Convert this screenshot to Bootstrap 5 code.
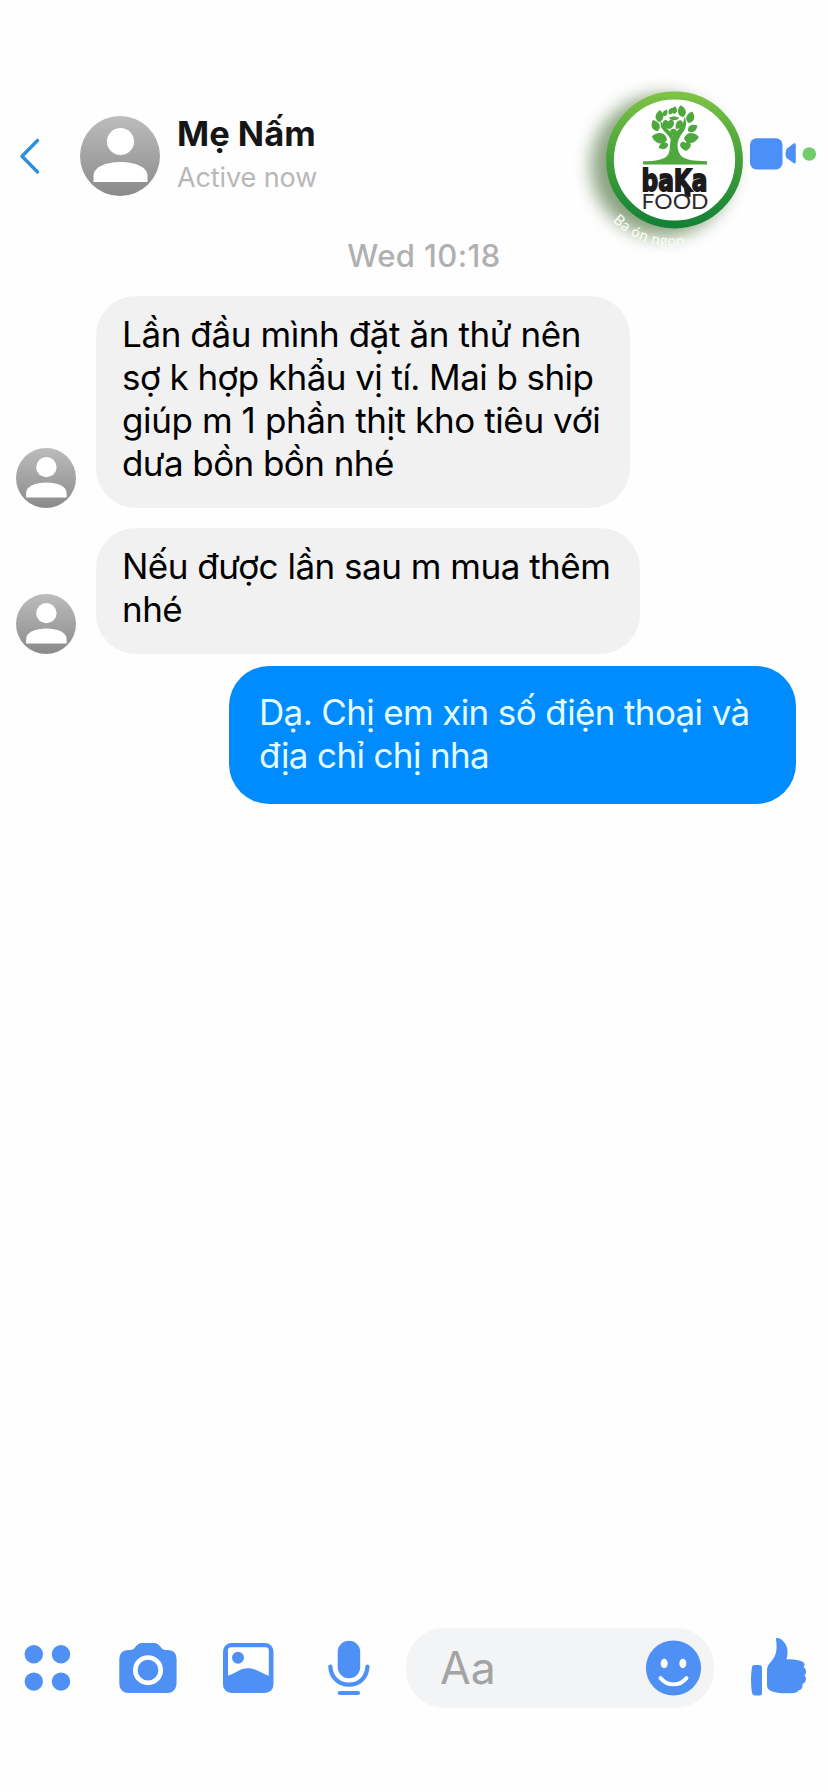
<!DOCTYPE html>
<html lang="vi">
<head>
<meta charset="utf-8">
<meta name="viewport" content="width=device-width, initial-scale=1">
<title>Mẹ Nấm</title>
<link href="https://cdn.jsdelivr.net/npm/bootstrap@5.3.0/dist/css/bootstrap.min.css" rel="stylesheet">
<style>
  body { font-family: Inter, "Noto Sans", sans-serif; background: #fefefe; color: #000; }
  .chat { height: 1792px; padding-top: 70px; padding-bottom: 84px; overflow: hidden; }
  .chat-head { height: 172px; }
  .chat-head svg, .composer svg { display: block; flex: none; overflow: visible; }
  .peer { padding-left: 17px; padding-top: 2px; }
  .peer-name { font-size: 34.5px; line-height: 42px; font-weight: 700; color: #161616; }
  .peer-state { font-size: 27px; line-height: 46px; color: #b8b8b8; letter-spacing: -.1px; }
  .stamp { font-size: 31px; line-height: 28px; font-weight: 500; letter-spacing: .4px; color: #b0b0b0; padding-left: 20px; margin-bottom: 26px; }
  .face { width: 60px; height: 60px; margin-left: 16px; margin-right: 20px; flex: none; }
  .bubble { font-size: 35px; line-height: 43px; border-radius: 40px; background: #f1f1f1; white-space: nowrap; padding: 17px 0 0 26px; }
  .bubble-a { width: 534px; height: 212px; }
  .bubble-b { width: 544px; height: 126px; letter-spacing: -.5px; }
  .bubble-me { width: 567px; height: 137.5px; margin-right: 32px; padding: 25px 0 0 30px; background: #008bff; color: #e4fbff; letter-spacing: -.64px; }
  .ls-1 { letter-spacing: -.4px; }
  .ls-2 { letter-spacing: -.57px; }
  .field { width: 308px; height: 80px; border-radius: 38px; background: #f3f4f6; margin-left: 6px; padding-left: 34px; padding-right: 12px; }
  .hint { font-size: 44.5px; line-height: 54px; color: #a3a3a3; }
</style>
</head>
<body>
<svg width="0" height="0" class="position-absolute" aria-hidden="true">
  <defs>
    <linearGradient id="grey" x1="0" y1="0" x2="0" y2="1"><stop offset="0" stop-color="#bcbcbc"/><stop offset="1" stop-color="#8a8a8a"/></linearGradient>
    <symbol id="person" viewBox="0 0 80 80">
      <circle cx="40" cy="40" r="40" fill="url(#grey)"/>
      <circle cx="40.5" cy="25.5" r="13.6" fill="#fff"/>
      <path d="M13.5 66V60C13.5 51 26 46 40.5 46S67.500 51 67.500 60V66Z" fill="#fff"/>
    </symbol>
  </defs>
</svg>
<main class="chat d-flex flex-column">
  <header class="chat-head d-flex align-items-center">
    <svg width="80" height="80" fill="none" stroke="#2f8fdf" stroke-width="3.4" stroke-linecap="round" stroke-linejoin="round"><path d="M37.500 24.500L22 40.200L37.500 56"/></svg>
    <svg width="80" height="80"><use href="#person"/></svg>
    <div class="peer">
      <div class="peer-name">Mẹ Nấm</div>
      <div class="peer-state">Active now</div>
    </div>
    <svg class="ms-auto" width="180" height="172" viewBox="0 0 180 172">
      <defs>
        <linearGradient id="ring" x1="0" y1="0" x2="0" y2="1"><stop offset="0" stop-color="#7cc243"/><stop offset=".5" stop-color="#43a03a"/><stop offset="1" stop-color="#148135"/></linearGradient>
        <filter id="soft" x="-30%" y="-30%" width="160%" height="160%"><feGaussianBlur stdDeviation="8.500"/></filter>
        <path id="arc" d="M42.500 151A84 84 0 0 0 150 161"/>
        <path id="leaf" d="M0 0C-5 -2 -5.500 -8 0 -12C5.500 -8 5 -2 0 0Z"/>
      </defs>
      <circle cx="92" cy="96" r="71" fill="#5f8050" opacity=".72" filter="url(#soft)"/>
      <text font-family="Lato" font-weight="400" font-size="15" letter-spacing=".5" fill="#f8fff4"><textPath href="#arc">Ba ón ngon</textPath></text>
      <circle cx="104.500" cy="90" r="64.500" fill="#fff" stroke="url(#ring)" stroke-width="7.800"/>
      <g fill="#4fa83d">
        <path d="M73 94.500V91.300C86 91 95 90 98.500 84C101.500 77 98 71 104 64C109 59 114 55 114.500 46C118 55 115 60 111 65C106 72 107 80 110.500 85C114 90 124 91 137 91.200V94.500Z"/>
        <path d="M101 70C99 65 94 62 91 57L90 49C92 56 100 60 103 65Z"/>
        <circle cx="103.500" cy="62" r="3.300"/>
        <path d="M100 59C92 58 91 53 94 50.500C96 49 98 51 98.500 51.500C100 48.500 104 49.500 104 53C104 56 102 58 100 59Z"/>
        <path d="M106 59C105 56 106 52 108 51C111 49 114 52 112.500 55C111 58 108 59 106 59Z"/>
        <path d="M116 81C109 78 109 74 112 72C114 71 115 72.500 115.500 73C118 70 122 73 120.500 76.500C119.500 79 117.500 80 116 81Z"/>
        <use href="#leaf" transform="translate(97 70) rotate(-76) scale(1.300)"/>
        <use href="#leaf" transform="translate(98 74) rotate(-112) scale(.85)"/>
        <use href="#leaf" transform="translate(88 61) rotate(-25)"/>
        <use href="#leaf" transform="translate(89 52) rotate(5)"/>
        <use href="#leaf" transform="translate(93.500 46) rotate(28) scale(.6)"/>
        <use href="#leaf" transform="translate(99 44) rotate(38) scale(.65)"/>
        <use href="#leaf" transform="translate(104 44) rotate(8) scale(.65)"/>
        <use href="#leaf" transform="translate(113 47) rotate(-12)"/>
        <use href="#leaf" transform="translate(118.500 53) rotate(18)"/>
        <use href="#leaf" transform="translate(118 61) rotate(60) scale(.9)"/>
        <use href="#leaf" transform="translate(114 69) rotate(82) scale(1.250)"/>
        <path d="M99 48C101 46 107 46 109 48C107 51 101 51 99 48Z"/>
      </g>
      <path d="M114 118H120.500V127H115Z" fill="#1d1a1c"/>
      <text x="71.500" y="120.500" font-family="DejaVu Sans" font-weight="700" font-size="31" textLength="66" lengthAdjust="spacingAndGlyphs" fill="#1d1a1c" stroke="#1d1a1c" stroke-width="1.800">baKa</text>
      <text x="71.500" y="139" font-family="Lato" font-weight="400" font-size="20.500" textLength="67" lengthAdjust="spacingAndGlyphs" fill="#2d2a2c">FOOD</text>
    </svg>
    <svg width="78" height="80"><rect y="22.300" width="32.500" height="31.200" rx="6.500" fill="#4b8ff8"/><path d="M36.500 33L43.500 27.500Q45.500 26.500 45.800 28.500V45.500Q45.500 48.500 43.500 47L36.500 42Q34.500 38 36.500 33Z" fill="#4b8ff8"/><circle cx="59.300" cy="38" r="6.800" fill="#71cc6c"/></svg>
  </header>

  <div class="stamp text-center">Wed 10:18</div>

  <div class="d-flex align-items-end mb-3 pb-1">
    <svg class="face"><use href="#person"/></svg>
    <div class="bubble bubble-a">
      <div class="ls-1">Lần đầu mình đặt ăn thử nên</div>
      <div class="ls-2">sợ k hợp khẩu vị tí. Mai b ship</div>
      <div class="ls-1">giúp m 1 phần thịt kho tiêu với</div>
      <div class="ls-2">dưa bồn bồn nhé</div>
    </div>
  </div>
  <div class="d-flex align-items-end mb-2 pb-1">
    <svg class="face"><use href="#person"/></svg>
    <div class="bubble bubble-b">Nếu được lần sau m mua thêm<br>nhé</div>
  </div>
  <div class="d-flex justify-content-end">
    <div class="bubble bubble-me">Dạ. Chị em xin số điện thoại và<br>địa chỉ chị nha</div>
  </div>

  <footer class="composer d-flex align-items-center mt-auto">
    <svg width="100" height="80" fill="#4f90f5"><circle cx="33.800" cy="26.200" r="9.200"/><circle cx="61" cy="26.200" r="9.200"/><circle cx="33.800" cy="53.600" r="9.200"/><circle cx="61" cy="53.600" r="9.200"/></svg>
    <svg width="100" height="80" viewBox="100 0 100 80"><path d="M128 22H131C134 22 136 17.500 138.500 16Q140 15 142 15H154Q156 15 157.500 16C160 17.500 162 22 165 22H168Q176.600 22.500 176.600 31V55.500Q176 64.500 168 65H128Q119.500 64.500 119.300 55.500V31Q119.500 22.500 128 22Z" fill="#4f90f5"/><circle cx="148" cy="42.200" r="12.700" fill="none" stroke="#fff" stroke-width="4.600"/></svg>
    <svg width="100" height="80" viewBox="200 0 100 80"><rect x="223" y="15" width="50.500" height="50" rx="8.500" fill="#4f90f5"/><path d="M231 19.300H265.500Q268.800 19.300 268.800 22.500V47.800C262 45.500 256 40.200 248 40.200S235 45.500 228 47.800V22.500Q228 19.300 231 19.300Z" fill="#fff"/><circle cx="238" cy="29.700" r="6" fill="#4f90f5"/></svg>
    <svg width="100" height="80" viewBox="300 0 100 80" fill="none" stroke="#4f90f5" stroke-width="4.200" stroke-linecap="round"><rect x="337.700" y="12.700" width="22.500" height="37.500" rx="11.200" fill="#4f90f5" stroke="none"/><path d="M330.300 38.500C331 49 338 56.700 349 56.700S366.800 49 367.500 38.500M339.800 65H358"/></svg>
    <div class="field d-flex align-items-center justify-content-between">
      <span class="hint">Aa</span>
      <svg width="56" height="56"><circle cx="27.500" cy="28" r="27.600" fill="#4f90f5"/><ellipse cx="18.200" cy="23.500" rx="3.500" ry="4.700" fill="#fff"/><ellipse cx="36.800" cy="23.500" rx="3.500" ry="4.700" fill="#fff"/><path d="M14.500 38C21 46.500 34 46.500 40.500 38" fill="none" stroke="#fff" stroke-width="3.800" stroke-linecap="round"/></svg>
    </div>
    <svg width="114" height="80" viewBox="714 0 114 80" fill="#4f90f5"><path d="M754 37H759.500Q762 37 762 39.500V65Q762 67.500 759.500 67.500H755Q753 67.500 752 65Q750 52 752 39Q752.500 37 754 37Z"/><path d="M776 11C776 9.500 779 9.500 782 12C787 16 789 23 786.500 31.500C793 31 799 32 803 34C805 35.500 805 37.500 803.500 39C806.500 41 807 45 804.500 47.500C807 50 806.500 54 802.500 56C803 60 801 62 799 62C798 64 796 65 793 65C785 65.500 777 65.500 771 63C768 61.500 767 60 767 57V42C767 38 769 36 772 32.500C776 27 777.500 23 776 11Z"/></svg>
  </footer>
</main>
<script src="https://cdn.jsdelivr.net/npm/bootstrap@5.3.0/dist/js/bootstrap.bundle.min.js"></script>
</body>
</html>
